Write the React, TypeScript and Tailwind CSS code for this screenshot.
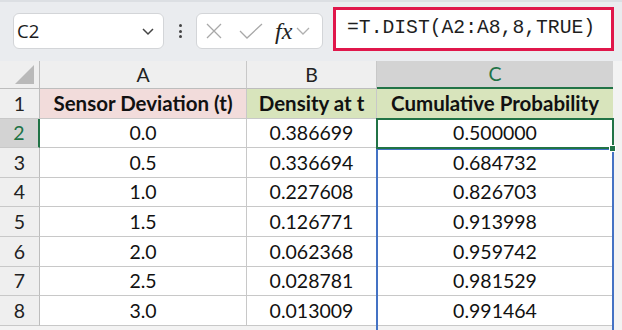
import React from "react";

const rowsData: [string, string, string][] = [
  ["0.0", "0.386699", "0.500000"],
  ["0.5", "0.336694", "0.684732"],
  ["1.0", "0.227608", "0.826703"],
  ["1.5", "0.126771", "0.913998"],
  ["2.0", "0.062368", "0.959742"],
  ["2.5", "0.028781", "0.981529"],
  ["3.0", "0.013009", "0.991464"],
];

const rowHeights = ["h-[30px]", "h-[29px]", "h-[30px]", "h-[29px]", "h-[30px]", "h-[30px]", "h-[29px]", "h-[30px]"];

const cellFont = { fontFamily: "Lato, 'Open Sans', sans-serif" } as React.CSSProperties;

export default function App() {
  return (
    <div className="w-[622px] h-[330px] overflow-hidden bg-[#f3f3f3] flex flex-col" style={cellFont}>
      {/* Toolbar */}
      <div className="h-[61px] bg-[#eaecef] border-t-2 border-[#dcdfe3] flex items-start shrink-0">
        <div
          className="mt-[11px] ml-[13px] w-[151px] h-[36px] bg-white border border-[#d3d5d8] rounded-[6px] flex items-center justify-between pl-[3px] pr-[8px]"
          style={{ fontFamily: "'Open Sans', 'Liberation Sans', sans-serif" }}
        >
          <span className="text-[18.5px] text-[#1b1b1b] leading-none">C2</span>
          <svg width="14" height="10" viewBox="0 0 14 10">
            <path d="M2 3 L7 8 L12 3" fill="none" stroke="#444" strokeWidth="1.5" />
          </svg>
        </div>
        <div className="w-[32px] h-[36px] mt-[11px] flex flex-col items-center justify-center gap-[2.5px]">
          <div className="w-[3px] h-[3px] rounded-full bg-[#444]" />
          <div className="w-[3px] h-[3px] rounded-full bg-[#444]" />
          <div className="w-[3px] h-[3px] rounded-full bg-[#444]" />
        </div>
        <div className="mt-[11px] w-[127px] h-[36px] bg-white border border-[#d3d5d8] rounded-[6px] flex items-center pl-[9px]">
          <svg width="16" height="16" viewBox="0 0 16 16">
            <path d="M1 1 L15 15 M15 1 L1 15" stroke="#a8a8a8" strokeWidth="1.3" fill="none" />
          </svg>
          <svg width="24" height="16" viewBox="0 0 24 16" className="ml-[17px]">
            <path d="M1 8 L8 15 L23 1" stroke="#a8a8a8" strokeWidth="1.3" fill="none" />
          </svg>
          <span
            className="ml-[12px] text-[24px] italic text-[#222] leading-none"
            style={{ fontFamily: "'Liberation Serif', 'DejaVu Serif', serif" }}
          >
            fx
          </span>
          <svg width="14" height="10" viewBox="0 0 14 10" className="ml-[4px]">
            <path d="M1 2 L7 8 L13 2" fill="none" stroke="#b0b0b0" strokeWidth="1.3" />
          </svg>
        </div>
        <div className="mt-[5px] ml-[10px] w-[281px] h-[44px] bg-white border-[3px] border-[#e0174b] flex items-center pl-[11px]">
          <span
            className="text-[19.7px] text-[#1e1e1e] leading-none"
            style={{ fontFamily: "'Liberation Mono', 'DejaVu Sans Mono', monospace" }}
          >
            =T.DIST(A2:A8,8,TRUE)
          </span>
        </div>
      </div>

      {/* Grid */}
      <div className="relative flex flex-col w-[613px]">
        {/* header row */}
        <div className="flex h-[28px] bg-[#efefef]">
          <div className="w-[40px] border-r border-[#bdbdbd] border-b border-b-[#bdbdbd] relative">
            <svg width="20" height="19" viewBox="0 0 20 19" className="absolute right-[4px] bottom-[4px]">
              <polygon points="19,0 19,19 0,19" fill="#b9b9b9" />
            </svg>
          </div>
          <div className="w-[207px] border-r border-[#c8c8c8] border-b border-b-[#bdbdbd] flex items-center justify-center text-[19.5px] text-[#222]">A</div>
          <div className="w-[130px] border-r border-[#c8c8c8] border-b border-b-[#bdbdbd] flex items-center justify-center text-[19.5px] text-[#222]">B</div>
          <div className="w-[236px] bg-[#d3d3d3] border-b-2 border-[#217346] flex items-center justify-center text-[19.5px] text-[#217346]">C</div>
        </div>
        {/* row 1 */}
        <div className={`flex ${rowHeights[0]}`}>
          <div className="w-[40px] bg-[#efefef] border-r border-[#bdbdbd] border-b border-b-[#c8c8c8] flex items-center justify-center text-[19.5px] text-[#222]">1</div>
          <div className="w-[207px] bg-[#f2dcdb] border-r border-b border-[#c8c8c8] flex items-center justify-center text-[20.5px] font-bold text-[#111]">Sensor Deviation (t)</div>
          <div className="w-[130px] bg-[#d8e4bc] border-r border-b border-[#c8c8c8] flex items-center justify-center text-[20.5px] font-bold text-[#111]">Density at t</div>
          <div className="w-[236px] bg-[#d8e4bc] border-b border-[#c8c8c8] flex items-center justify-center text-[20.5px] font-bold text-[#111]">Cumulative Probability</div>
        </div>
        {rowsData.map((r, i) => {
          const sel = i === 0;
          return (
            <div key={i} className={`flex ${rowHeights[i + 1]}`}>
              <div
                className={
                  sel
                    ? "w-[40px] bg-[#d3d3d3] border-r-2 border-[#217346] border-b border-b-[#c8c8c8] flex items-center justify-center text-[19.5px] text-[#217346]"
                    : "w-[40px] bg-[#efefef] border-r border-[#bdbdbd] border-b border-b-[#c8c8c8] flex items-center justify-center text-[19.5px] text-[#222]"
                }
              >
                {i + 2}
              </div>
              <div className="w-[207px] bg-white border-r border-b border-[#c8c8c8] flex items-center justify-center text-[19.5px] text-[#111]">{r[0]}</div>
              <div className="w-[130px] bg-white border-r border-b border-[#c8c8c8] flex items-center justify-center text-[19.5px] text-[#111]">{r[1]}</div>
              <div className="w-[236px] bg-white border-b border-[#c8c8c8] flex items-center justify-center text-[19.5px] text-[#111]">{r[2]}</div>
            </div>
          );
        })}
        {/* range outline C2:C8 */}
        <div className="absolute left-[376px] top-[87px] w-[238px] h-[208px] border-2 border-[#4472c4] pointer-events-none" />
        {/* active cell C2 */}
        <div className="absolute left-[376px] top-[57px] w-[238px] h-[31px] border-2 border-[#217346] pointer-events-none" />
        <div className="absolute left-[609px] top-[84px] w-[7px] h-[7px] bg-[#217346] border border-white pointer-events-none" />
      </div>
    </div>
  );
}
